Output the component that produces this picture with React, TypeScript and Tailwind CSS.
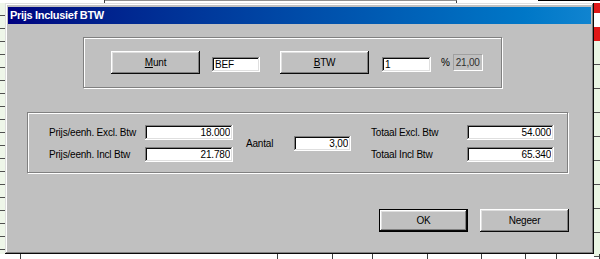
import React from "react";

const raised =
  "bg-[#c0c0c0] shadow-[inset_-1px_-1px_#0a0a0a,inset_1px_1px_#ffffff,inset_-2px_-2px_#808080,inset_2px_2px_#dfdfdf]";
const sunken =
  "bg-white border-0 outline-none shadow-[inset_-1px_-1px_#ffffff,inset_1px_1px_#808080,inset_-2px_-2px_#dfdfdf,inset_2px_2px_#0a0a0a]";
const etched =
  "border border-[#808080] shadow-[1px_1px_#ffffff,inset_1px_1px_#ffffff]";

function Button({ children, isDefault }: { children: React.ReactNode; isDefault?: boolean }) {
  return (
    <button
      type="button"
      className={
        "w-[89px] h-[23px] text-[10px] text-black flex items-center justify-center " +
        (isDefault ? "border border-black " : "") +
        raised
      }
    >
      {children}
    </button>
  );
}

function Field({ value, w, right }: { value: string; w: string; right?: boolean }) {
  return (
    <input
      readOnly
      defaultValue={value}
      className={
        "h-[15px] text-[10px] text-black " +
        w +
        " " +
        (right ? "text-right pr-[3px] " : "pl-[3px] ") +
        sunken
      }
    />
  );
}

export default function App() {
  const leftCells = Array.from({ length: 19 });
  const rightCells = Array.from({ length: 9 });
  const bottomCells = [21, 257, 55, 40, 55, 54, 44, 31, 43];

  return (
    <div className="w-[600px] h-[259px] bg-white flex flex-col overflow-hidden font-['Liberation_Sans',Arial,sans-serif] tracking-[-0.2px]">
      {/* spreadsheet top edge */}
      <div className="h-[3px] flex">
        <div className="w-[105px] border-r border-[#404040]" />
        <div className="w-[352px] border-t border-[#909090] border-r border-r-[#404040]" />
        <div className="w-[81px]" />
        <div className="flex-1 border-t border-black" />
      </div>

      <div className="flex h-[251px]">
        {/* spreadsheet left column */}
        <div className="w-[5px] flex flex-col bg-[#eef6e9]">
          {leftCells.map((_, i) => (
            <div key={i} className="h-[13px] shrink-0 border-b border-[#505050]" />
          ))}
        </div>

        {/* dialog */}
        <div className="w-[589px] bg-[#c0c0c0] p-[3px] flex flex-col shadow-[inset_-1px_-1px_#0a0a0a,inset_1px_1px_#dfdfdf,inset_-2px_-2px_#808080,inset_2px_2px_#ffffff]">
          <div className="h-[17px] mt-[1px] bg-linear-to-r from-[#000080] to-[#1084d0] flex items-center pl-[2px]">
            <span className="text-white font-bold text-[11px] tracking-[-0.3px]">
              Prijs Inclusief BTW
            </span>
          </div>

          {/* currency / vat */}
          <div className={"mt-[13px] ml-[75px] w-[419px] h-[51px] flex items-center pl-[27px] " + etched}>
            <Button>
              <span className="underline">M</span>unt
            </Button>
            <div className="ml-[12px]">
              <Field value="BEF" w="w-[48px]" />
            </div>
            <div className="ml-[20px]">
              <Button>
                <span className="underline">B</span>TW
              </Button>
            </div>
            <div className="ml-[13px]">
              <Field value="1" w="w-[49px]" />
            </div>
            <span className="ml-[10px] text-[10px] text-black">%</span>
            <div className="ml-[3px] w-[30px] h-[17px] flex items-center justify-end pr-[2px] text-[10px] text-[#303030] border border-t-[#a0a0a0] border-l-[#a0a0a0] border-r-white border-b-white">
              21,00
            </div>
          </div>

          {/* prices */}
          <div className={"mt-[24px] ml-[19px] w-[541px] h-[61px] flex items-center pl-[21px] pt-[1px] " + etched}>
            <div className="grid grid-cols-[96px_88px] gap-y-[7px] items-center">
              <span className="text-[10px] text-black">Prijs/eenh. Excl. Btw</span>
              <Field value="18.000" w="w-[88px]" right />
              <span className="text-[10px] text-black">Prijs/eenh. Incl Btw</span>
              <Field value="21.780" w="w-[88px]" right />
            </div>
            <span className="ml-[13px] w-[48px] text-[10px] text-black">Aantal</span>
            <Field value="3,00" w="w-[57px]" right />
            <div className="ml-[20px] grid grid-cols-[96px_87px] gap-y-[7px] items-center">
              <span className="text-[10px] text-black">Totaal Excl. Btw</span>
              <Field value="54.000" w="w-[87px]" right />
              <span className="text-[10px] text-black">Totaal Incl Btw</span>
              <Field value="65.340" w="w-[87px]" right />
            </div>
          </div>

          {/* actions */}
          <div className="mt-[36px] flex justify-end gap-[12px] pr-[22px]">
            <Button isDefault>OK</Button>
            <Button>Negeer</Button>
          </div>
        </div>

        {/* spreadsheet right column */}
        <div className="w-[6px] flex flex-col">
          <div className="h-[10px] shrink-0 bg-[#e01818]" />
          <div className="h-[14px] shrink-0 bg-white" />
          <div className="h-[14px] shrink-0 bg-[#e01818]" />
          {rightCells.map((_, i) => (
            <div key={i} className="h-[24px] shrink-0 bg-[#eaf6e4] border-b border-[#505050]" />
          ))}
        </div>
      </div>

      {/* spreadsheet bottom edge */}
      <div className="h-[5px] flex">
        {bottomCells.map((w, i) => (
          <div key={i} style={{ width: w }} className="shrink-0 border-r border-[#404040]" />
        ))}
      </div>
    </div>
  );
}
